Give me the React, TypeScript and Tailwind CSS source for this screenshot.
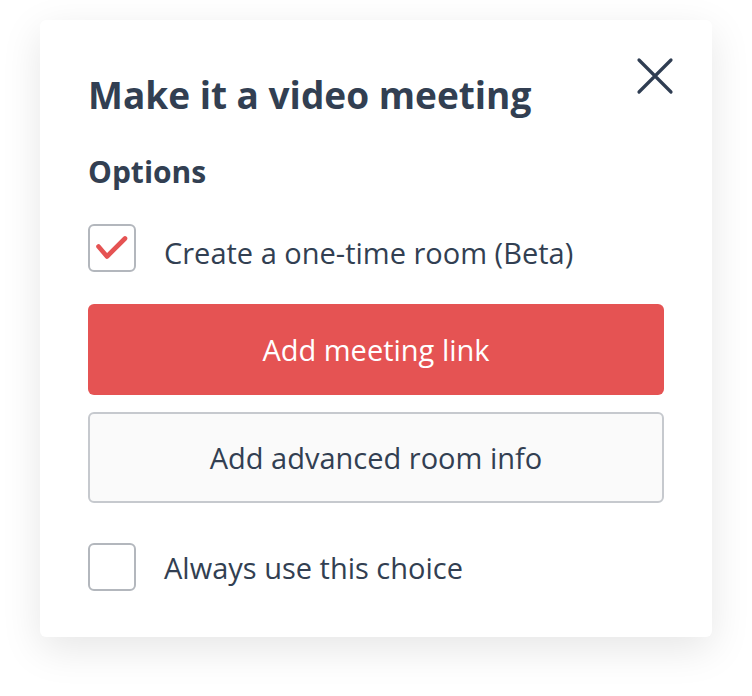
function CheckBox({ checked }: { checked?: boolean }) {
  return (
    <div className="h-12 w-12 shrink-0 rounded-md border-2 border-[#b3b7bd] bg-white">
      {checked && (
        <svg viewBox="0 0 44 44" className="h-11 w-11" fill="none">
          <path
            d="M8.5 20.5L17 30.5L35 12.5"
            stroke="#e55353"
            strokeWidth="4.6"
            strokeLinecap="round"
            strokeLinejoin="round"
          />
        </svg>
      )}
    </div>
  );
}

export default function App() {
  return (
    <div
      className="min-h-[696px] w-[752px] bg-white pt-5 pl-10 text-[#323f52]"
      style={{ fontFamily: '"Open Sans", Lato, sans-serif' }}
    >
      <div className="relative w-[672px] rounded-md bg-white px-12 pb-[46px] pt-[55px] shadow-[0_12px_40px_rgba(0,0,0,0.10)]">
        <button className="absolute right-[38px] top-[37px] text-[#2f3d52]">
          <svg viewBox="0 0 38 38" className="h-[38px] w-[38px]" fill="none">
            <path d="M3 3L35 35M35 3L3 35" stroke="currentColor" strokeWidth="3.2" strokeLinecap="round" />
          </svg>
        </button>

        <h1 className="text-[37px] font-bold leading-[40px]">Make it a video meeting</h1>

        <h2 className="mt-[41px] text-[30px] font-bold leading-[32px]">Options</h2>

        <label className="mt-9 flex items-center gap-7">
          <CheckBox checked />
          <span className="mt-[10px] text-[29px] leading-[32px]">Create a one-time room (Beta)</span>
        </label>

        <div className="mt-8 flex flex-col gap-[17px]">
          <button className="h-[91px] w-full rounded-md bg-[#e55353] text-[29px] text-white">
            Add meeting link
          </button>
          <button className="h-[91px] w-full rounded-md border-2 border-[#c6c9ce] bg-[#fafafa] text-[29px]">
            Add advanced room info
          </button>
        </div>

        <label className="mt-10 flex items-center gap-7">
          <CheckBox />
          <span className="mt-[2px] text-[29px] leading-[32px]">Always use this choice</span>
        </label>
      </div>
    </div>
  );
}
